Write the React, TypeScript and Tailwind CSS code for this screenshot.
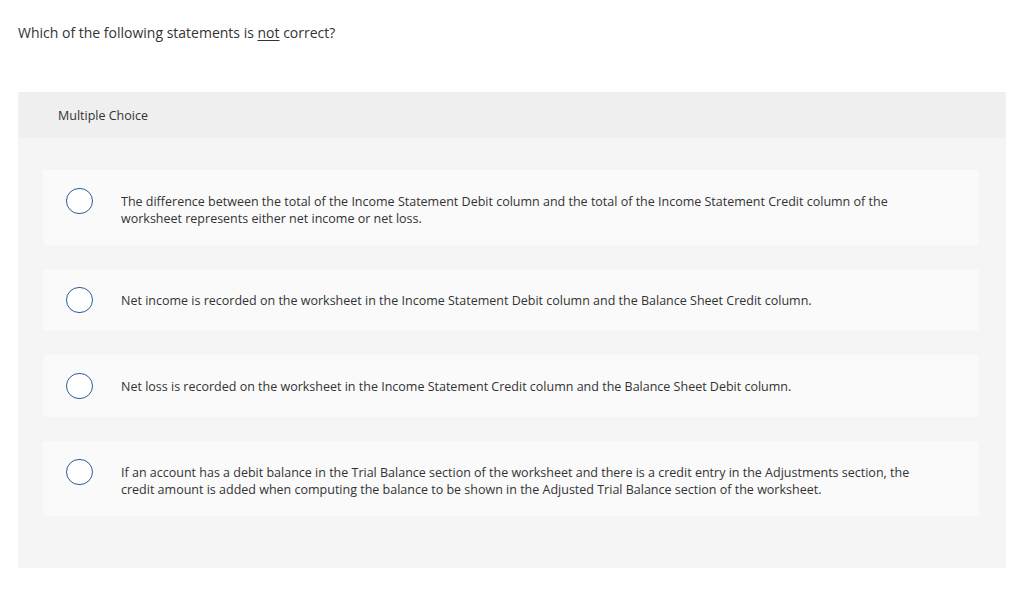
import React from "react";

const options = [
  "The difference between the total of the Income Statement Debit column and the total of the Income Statement Credit column of the worksheet represents either net income or net loss.",
  "Net income is recorded on the worksheet in the Income Statement Debit column and the Balance Sheet Credit column.",
  "Net loss is recorded on the worksheet in the Income Statement Credit column and the Balance Sheet Debit column.",
  "If an account has a debit balance in the Trial Balance section of the worksheet and there is a credit entry in the Adjustments section, the credit amount is added when computing the balance to be shown in the Adjusted Trial Balance section of the worksheet.",
];

export default function App() {
  return (
    <div
      className="min-h-[591px] bg-white px-[18px] text-[#333333]"
      style={{ fontFamily: "'Open Sans', 'Liberation Sans', sans-serif" }}
    >
      <div className="pt-[24px] pb-[50px] text-[14px] leading-[18px]">
        Which of the following statements is <span className="underline underline-offset-2">not</span> correct?
      </div>
      <div className="rounded-[2px] overflow-hidden bg-[#f5f5f5]">
        <div className="h-[46px] bg-[#efefef] flex items-center pl-[40px] pt-[3px] text-[12.5px]">
          Multiple Choice
        </div>
        <div className="pt-[32px] pb-[52px] pl-[25px] pr-[27px] flex flex-col gap-[24px]">
          {options.map((t, i) => (
            <div
              key={i}
              className="bg-[#fafafa] rounded-[3px] py-[18px] pl-[23px] pr-[50px] flex items-start"
            >
              <div className="w-[27px] h-[26px] shrink-0 rounded-full border border-[#2c5d98] bg-white" />
              <div className="ml-[28px] pt-[5px] text-[12.5px] leading-[17px]">{t}</div>
            </div>
          ))}
        </div>
      </div>
    </div>
  );
}
